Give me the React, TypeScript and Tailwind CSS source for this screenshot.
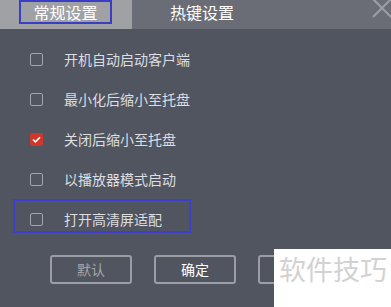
import React from 'react';

const options = [
  { label: '开机自动启动客户端', checked: false },
  { label: '最小化后缩小至托盘', checked: false },
  { label: '关闭后缩小至托盘', checked: true },
  { label: '以播放器模式启动', checked: false },
  { label: '打开高清屏适配', checked: false },
];

function Box({ checked }: { checked: boolean }) {
  if (checked) {
    return (
      <span className="w-[13px] h-[13px] rounded-[2px] bg-[#d0372b] flex items-center justify-center">
        <svg width="9" height="7" viewBox="0 0 9 7" fill="none">
          <path d="M1 3.5 L3.4 5.8 L8 1.2" stroke="#fff" strokeWidth="1.6" />
        </svg>
      </span>
    );
  }
  return <span className="w-[13px] h-[13px] rounded-[2px] border-[1.5px] border-[#a3a5ab]" />;
}

export default function App() {
  return (
    <div
      className="w-[391px] h-[307px] bg-[#51555f] relative overflow-hidden"
      style={{ fontFamily: '"Noto Sans CJK SC", "Noto Sans", sans-serif' }}
    >
      {/* tabs */}
      <div className="flex h-[29px]">
        <div className="w-[132px] bg-[#9fa1a4] pl-[19px]">
          <div className="w-[93px] h-[24px] border-2 border-[#3a3ec6] flex items-center justify-center text-white text-[16px] leading-none">
            常规设置
          </div>
        </div>
        <div className="flex-1 bg-[#6a6d76] relative">
          <div className="pl-[38px] h-[24px] flex items-center text-white text-[16px] leading-none">热键设置</div>
          <svg className="absolute right-[-4px] top-[-2px]" width="24" height="20" viewBox="0 0 24 20">
            <path d="M2 1 L20 19 M20 1 L2 19" stroke="#9a9da4" strokeWidth="2.2" />
          </svg>
        </div>
      </div>

      {/* options */}
      <div className="pt-[10px] pl-[30px]">
        {options.map((o) => (
          <div key={o.label} className="h-[40px] flex items-center">
            <Box checked={o.checked} />
            <span className="ml-[21px] text-[14px] text-[#dcdee2] leading-none">{o.label}</span>
          </div>
        ))}
      </div>

      {/* highlight around last option */}
      <div className="absolute left-[13px] top-[199px] w-[178px] h-[34px] border-2 border-[#3c3fcb]" />

      {/* buttons */}
      <div className="flex gap-[22px] pl-[50px] mt-[16px]">
        <button className="w-[82px] h-[29px] border-2 border-[#9c9ea6] rounded-[3px] text-[14px] text-[#a4a6ad]">默认</button>
        <button className="w-[82px] h-[29px] border-2 border-[#9c9ea6] rounded-[3px] text-[14px] text-white">确定</button>
        <button className="w-[82px] h-[29px] border-2 border-[#9c9ea6] rounded-[3px]" aria-label="取消" />
      </div>

      {/* watermark */}
      <div className="absolute left-[274px] top-[249px] w-[117px] h-[58px] bg-white pl-[5px] pt-[6px] text-[27px] leading-none text-[#d2d2d2]">
        软件技巧
      </div>
    </div>
  );
}
